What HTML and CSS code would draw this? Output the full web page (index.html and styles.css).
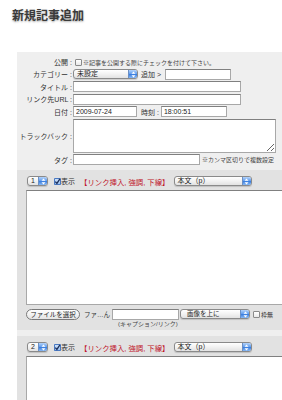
FILE: index.html
```html
<!DOCTYPE html>
<html lang="ja">
<head>
  <meta charset="UTF-8" />
  <title>新規記事追加</title>
  <link rel="stylesheet" href="styles.css">
</head>
<body>
  <h1 class="page-title">新規記事追加</h1>

  <div class="panel">
    <div class="fields">
      <div class="row row-check">
        <span class="label">公開 :</span>
        <span class="check"></span>
        <span class="note">※記事を公開する際にチェックを付けて下さい。</span>
      </div>
      <div class="row">
        <span class="label">カテゴリー :</span>
        <span class="select w-cat-select"><span class="select-text">未設定</span><span class="select-arrow"><svg width="5" height="7" viewBox="0 0 5 7"><path d="M2.5 0.5 L4.5 2.8 H0.5 Z M2.5 6.5 L4.5 4.2 H0.5 Z" fill="#fff"/></svg></span></span>
        <span class="add-text">追加 &gt;</span>
        <input class="input w-cat" type="text">
      </div>
      <div class="row">
        <span class="label">タイトル :</span>
        <input class="input w-title" type="text">
      </div>
      <div class="row">
        <span class="label">リンク先URL :</span>
        <input class="input w-title" type="text">
      </div>
      <div class="row">
        <span class="label">日付 :</span>
        <input class="input w-date" type="text" value="2009-07-24">
        <span class="time-label">時刻 :</span>
        <input class="input w-time" type="text" value="18:00:51">
      </div>
      <div class="row row-tall">
        <span class="label">トラックバック :</span>
        <textarea class="input trackback"></textarea>
      </div>
      <div class="row">
        <span class="label">タグ :</span>
        <input class="input w-tag" type="text">
        <span class="note tag-note">※カンマ区切りで複数設定</span>
      </div>
    </div>

    <div class="block">
      <div class="block-head">
        <span class="select num-select"><span class="select-text">1</span><span class="select-arrow"><svg width="5" height="7" viewBox="0 0 5 7"><path d="M2.5 0.5 L4.5 2.8 H0.5 Z M2.5 6.5 L4.5 4.2 H0.5 Z" fill="#fff"/></svg></span></span>
        <span class="check checked"><svg width="7" height="7" viewBox="0 0 7 7"><path d="M1.3 3.6 L2.9 5.4 L5.9 0.8" fill="none" stroke="#1d2f5a" stroke-width="1.3"/></svg></span>
        <span class="show-text">表示</span>
        <span class="edit-links">【リンク挿入, 強調, 下線】</span>
        <span class="select tag-select"><span class="select-text">本文（p）</span><span class="select-arrow"><svg width="5" height="7" viewBox="0 0 5 7"><path d="M2.5 0.5 L4.5 2.8 H0.5 Z M2.5 6.5 L4.5 4.2 H0.5 Z" fill="#fff"/></svg></span></span>
      </div>
      <textarea class="input body-text"></textarea>
      <div class="file-row">
        <button class="file-btn" type="button">ファイルを選択</button>
        <span class="file-name">ファ…ん</span>
        <input class="input w-cap" type="text">
        <span class="select pos-select"><span class="select-text">画像を上に</span><span class="select-arrow"><svg width="5" height="7" viewBox="0 0 5 7"><path d="M2.5 0.5 L4.5 2.8 H0.5 Z M2.5 6.5 L4.5 4.2 H0.5 Z" fill="#fff"/></svg></span></span>
        <span class="check"></span>
        <span class="frame-text">枠無</span>
      </div>
      <div class="caption">(キャプション/リンク)</div>
    </div>

    <div class="block">
      <div class="block-head">
        <span class="select num-select"><span class="select-text">2</span><span class="select-arrow"><svg width="5" height="7" viewBox="0 0 5 7"><path d="M2.5 0.5 L4.5 2.8 H0.5 Z M2.5 6.5 L4.5 4.2 H0.5 Z" fill="#fff"/></svg></span></span>
        <span class="check checked"><svg width="7" height="7" viewBox="0 0 7 7"><path d="M1.3 3.6 L2.9 5.4 L5.9 0.8" fill="none" stroke="#1d2f5a" stroke-width="1.3"/></svg></span>
        <span class="show-text">表示</span>
        <span class="edit-links">【リンク挿入, 強調, 下線】</span>
        <span class="select tag-select"><span class="select-text">本文（p）</span><span class="select-arrow"><svg width="5" height="7" viewBox="0 0 5 7"><path d="M2.5 0.5 L4.5 2.8 H0.5 Z M2.5 6.5 L4.5 4.2 H0.5 Z" fill="#fff"/></svg></span></span>
      </div>
      <textarea class="input body-text"></textarea>
    </div>
  </div>
</body>
</html>
```

FILE: styles.css
```css
body {
  margin: 0;
  font-family: "Liberation Sans", "Noto Sans CJK JP", sans-serif;
  font-size: 7px;
  color: #333;
  background: #fff;
  overflow: hidden;
}
.page-title {
  margin: 0;
  padding: 7px 0 0 12px;
  height: 45px;
  font-family: "Noto Sans CJK JP", sans-serif;
  font-size: 12px;
  line-height: 16px;
  font-weight: bold;
  color: #3a3a3a;
  text-shadow: 0 1px 2px rgba(0, 0, 0, 0.35);
}
.panel {
  margin-left: 17px;
  width: 300px;
  background: #efefef;
  padding-top: 5px;
  min-height: 400px;
}
.fields {
  display: flex;
  flex-direction: column;
  gap: 1.5px;
}
.row {
  display: flex;
  align-items: center;
  height: 11px;
  white-space: nowrap;
}
.row-check {
  height: 10px;
}
.row-tall {
  height: 34px;
}
.label {
  width: 55px;
  padding-right: 1px;
  text-align: right;
  color: #333;
}
.note {
  font-size: 6px;
  color: #444;
  margin-left: 1px;
}
.tag-note {
  margin-left: 2px;
}
.input {
  box-sizing: border-box;
  height: 11px;
  margin: 0;
  padding: 0 2px;
  border: 1px solid #a8a8a8;
  border-top-color: #808080;
  background: #fff;
  font-family: "Liberation Sans", "Noto Sans CJK JP", sans-serif;
  font-size: 7px;
  color: #222;
  outline: none;
}
.w-cat { width: 66px; margin-left: 4px; }
.w-title { width: 168px; }
.w-date { width: 64px; }
.w-time { width: 66px; margin-left: 2px; }
.w-tag { width: 127px; }
.w-cap { width: 67px; }
.trackback {
  width: 203px;
  height: 34px;
  resize: both;
}
.add-text {
  margin-left: 3px;
}
.time-label {
  margin-left: 4px;
}

/* mac style popup */
.select {
  display: inline-flex;
  align-items: stretch;
  box-sizing: border-box;
  height: 10px;
  border: 1px solid #8a8a8a;
  border-radius: 3px;
  background: linear-gradient(#ffffff, #f2f2f2 50%, #e2e2e2);
  overflow: hidden;
  box-shadow: 0 1px 1px rgba(0, 0, 0, 0.15);
}
.select-text {
  flex: 1;
  padding-left: 3px;
  line-height: 8px;
  color: #222;
  white-space: nowrap;
}
.select-arrow {
  width: 8px;
  display: flex;
  align-items: center;
  justify-content: center;
  background: linear-gradient(#b4d3fa, #5d9aec 50%, #3b7fe0 55%, #8ab9f3);
  border-left: 1px solid #6b8fc4;
}
.w-cat-select { width: 65px; }
.num-select { width: 21px; margin-left: 1px; }
.tag-select { width: 78px; margin-left: 4px; }
.pos-select { width: 70px; margin-left: 1px; }
.pos-select .select-text { padding-left: 6px; font-size: 6.5px; }

.check {
  display: inline-block;
  box-sizing: border-box;
  width: 7px;
  height: 7px;
  border: 1px solid #8a8a8a;
  border-radius: 1px;
  background: linear-gradient(#fff, #e8e8e8);
  margin-left: 2px;
}
.check.checked {
  border: none;
  background: linear-gradient(#d7e8fc, #8fbaf0);
  box-shadow: inset 0 0 0 1px #4a78c0;
  margin-left: 6px;
}
.check svg {
  display: block;
}

.block {
  margin-top: 5px;
  background: #e2e2e2;
  padding: 6px 0 2px 9px;
}
.block + .block {
  margin-top: 6px;
}
.block-head {
  display: flex;
  align-items: center;
  height: 10px;
  margin-bottom: 4px;
  white-space: nowrap;
}
.edit-links {
  margin-left: 5px;
  color: #c0152a;
  font-size: 7.4px;
}
.body-text {
  display: block;
  width: 290px;
  height: 115px;
  resize: none;
}
.block + .block .body-text {
  height: 60px;
}
.file-row {
  display: flex;
  align-items: center;
  height: 12px;
  margin-top: 3px;
  white-space: nowrap;
}
.file-btn {
  box-sizing: border-box;
  width: 54px;
  height: 11px;
  padding: 0;
  border: 1px solid #7a7a7a;
  border-radius: 6px;
  background: linear-gradient(#ffffff, #e4e4e4);
  font-family: "Noto Sans CJK JP", sans-serif;
  font-size: 6.5px;
  line-height: 9px;
  color: #222;
}
.file-name {
  width: 28px;
  margin-left: 4px;
  font-size: 6.5px;
}
.frame-text {
  margin-left: 1px;
  font-size: 6px;
}
.pos-select + .check {
  margin-left: 3px;
}
.caption {
  margin-left: 92px;
  font-size: 6px;
  line-height: 8px;
  height: 8px;
  color: #444;
}
```
